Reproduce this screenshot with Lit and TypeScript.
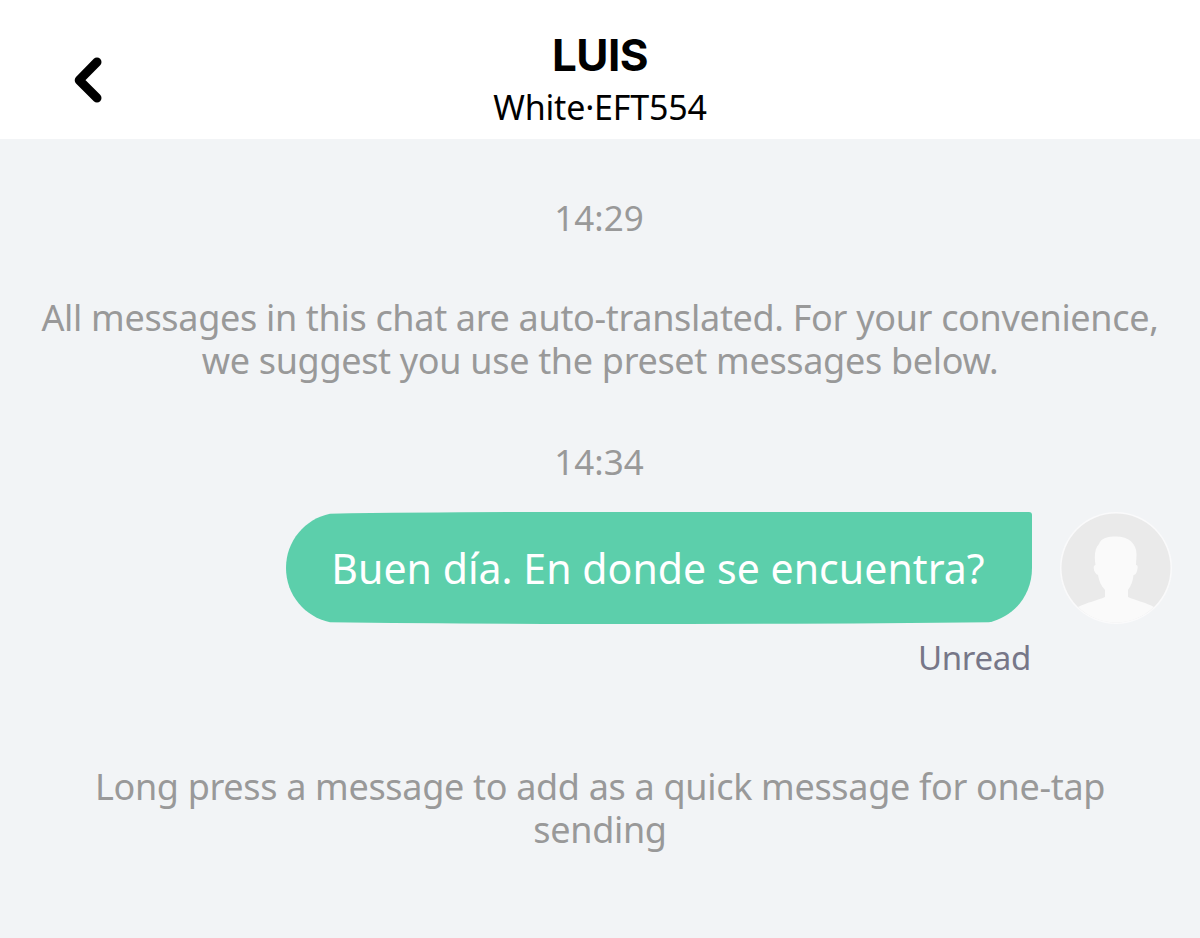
import { LitElement, css, html } from "lit";
import { customElement, property } from "lit/decorators.js";

@customElement("chat-header")
export class ChatHeader extends LitElement {
  @property({ type: String }) name = "";
  @property({ type: String }) vehicle = "";

  static get styles() {
    return css`
      :host {
        display: grid;
        grid-template-columns: 176px 1fr 176px;
        height: 139px;
        background: #fff;
        color: #000;
      }

      .back {
        border: 0;
        padding: 21px 0 0;
        background: none;
      }

      .back svg {
        display: block;
        margin: 0 auto;
      }

      .title {
        display: flex;
        flex-direction: column;
        align-items: center;
        padding-top: 28px;
        white-space: nowrap;
      }

      .name {
        font-family: Inter, sans-serif;
        font-size: 44px;
        line-height: 54px;
        font-weight: 700;
        letter-spacing: -0.6px;
      }

      .vehicle {
        font-size: 34px;
        line-height: 50px;
        letter-spacing: -0.2px;
      }
    `;
  }

  render() {
    return html`
      <button class="back" aria-label="Back">
        <svg width="32" height="50" viewBox="0 0 32 50" fill="none" stroke="#000" stroke-width="9" stroke-linecap="round" stroke-linejoin="round">
          <path d="M25 7 7.200 25.200 25 43" />
        </svg>
      </button>
      <div class="title">
        <span class="name">${this.name}</span>
        <span class="vehicle">${this.vehicle}</span>
      </div>
    `;
  }
}

@customElement("chat-message")
export class ChatMessage extends LitElement {
  @property({ type: String }) text = "";
  @property({ type: String }) status = "";

  static get styles() {
    return css`
      :host {
        display: flex;
        justify-content: flex-end;
        gap: 28px;
        padding-right: 28px;
      }

      .body {
        display: flex;
        flex-direction: column;
        align-items: flex-end;
      }

      .bubble {
        position: relative;
        box-sizing: border-box;
        width: 746px;
        height: 112px;
        padding-right: 2px;
        color: #fff;
        font-size: 41px;
        line-height: 112px;
        letter-spacing: 0.05px;
        text-align: center;
        white-space: nowrap;
      }

      .shape {
        position: absolute;
        inset: 0;
      }

      .text {
        position: relative;
      }

      .status {
        margin-top: 10px;
        padding-right: 1px;
        font-size: 33px;
        line-height: 48px;
        letter-spacing: -0.3px;
        color: #777788;
      }
    `;
  }

  render() {
    return html`
      <div class="body">
        <div class="bubble">
          <svg class="shape" width="746" height="112" viewBox="0 0 746 112">
            <path
              fill="#5ccfab"
              d="M44 1.800Q150 0 290 0H743Q746 0 746 3V56C746 83 728 105 703 110.300Q560 112 373 112 180 112 44 110.300C19 105 0 83 0 56S19 7 44 1.800Z"
            />
          </svg>
          <span class="text">${this.text}</span>
        </div>
        <span class="status">${this.status}</span>
      </div>
      <svg width="112" height="112" viewBox="0 0 112 112">
        <circle cx="56" cy="56" r="56" fill="#fafafb" />
        <circle cx="56" cy="56" r="54.500" fill="#eaeaea" />
        <path
          fill="#fafafa"
          d="M45 85V78C41 74 39 69 38 63 35 62 33 58 34 54 35 53 35 53 35.500 53 34 44 35 36 39 32 41 26 48 24.500 56 24.500 69 24.500 77 32 76.500 43L76 53C78 53 78 55 77 59 76 62 75 63 73.500 63 73 69 71 74 68 78V85C75 88 87 91 94 95A54.500 54.500 0 0 1 18 95C26 91 38 88 45 85Z"
        />
      </svg>
    `;
  }
}

@customElement("app-root")
export class AppRoot extends LitElement {
  static get styles() {
    return css`
      :host {
        display: block;
        height: 938px;
        overflow: hidden;
        background: #f2f4f6;
        font-family: "Noto Sans", "Open Sans", sans-serif;
      }

      .chat {
        display: flex;
        flex-direction: column;
        color: #999;
        text-align: center;
        font-size: 36px;
        line-height: 43px;
      }

      .time {
        padding: 57px 2px 0 0;
        font-size: 35px;
      }

      .note {
        padding-top: 57px;
        letter-spacing: -0.32px;
        white-space: nowrap;
      }

      .later {
        padding-top: 58px;
      }

      chat-message {
        padding-top: 29px;
      }

      .tip {
        padding-top: 83px;
      }
    `;
  }

  render() {
    return html`
      <chat-header name="LUIS" vehicle="White·EFT554"></chat-header>
      <div class="chat">
        <div class="time">14:29</div>
        <div class="note">
          All messages in this chat are auto-translated. For your convenience,<br />
          we suggest you use the preset messages below.
        </div>
        <div class="time later">14:34</div>
        <chat-message text="Buen día. En donde se encuentra?" status="Unread"></chat-message>
        <div class="note tip">
          Long press a message to add as a quick message for one-tap<br />
          sending
        </div>
      </div>
    `;
  }
}
